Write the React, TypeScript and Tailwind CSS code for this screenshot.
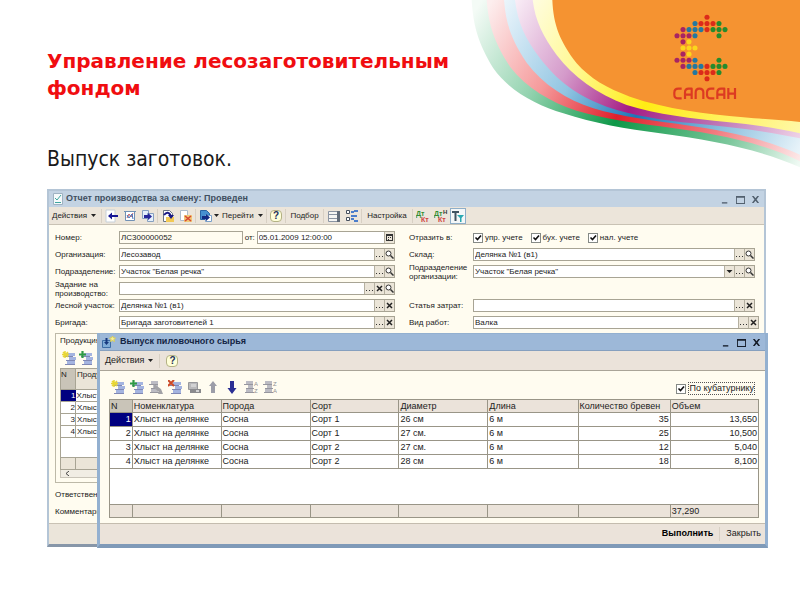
import type { ReactNode } from "react";

const dotColors: Record<string, string> = {
  r: "#dc2a1a",
  b: "#2478a0",
  g: "#258b2d",
  p: "#a82462",
  y: "#fbd61c",
};

const logoRows = [
  ".....r...",
  "...brrrg.",
  ".pbbbrggg",
  "pppb...g.",
  ".py......",
  ".yyy.....",
  ".py......",
  "pppb...g.",
  ".pbbbrggg",
  "...brrrg.",
  ".....r...",
];

function Banner() {
  return (
    <svg
      className="absolute top-0 right-0 w-[340px] h-[180px]"
      viewBox="0 0 1020 540"
      aria-hidden="true"
    >
      <defs>
        <linearGradient id="green" gradientUnits="userSpaceOnUse" x1="90" y1="-40" x2="1000" y2="520">
          <stop offset="0" stopColor="#f4fbf6" />
          <stop offset="0.25" stopColor="#94d3b0" />
          <stop offset="0.5" stopColor="#0e9848" />
          <stop offset="0.8" stopColor="#7cc79c" />
          <stop offset="1" stopColor="#f0faf4" />
        </linearGradient>
        <linearGradient id="red" gradientUnits="userSpaceOnUse" x1="120" y1="-40" x2="1020" y2="480">
          <stop offset="0" stopColor="#fdeeee" />
          <stop offset="0.25" stopColor="#f59a9b" />
          <stop offset="0.48" stopColor="#e0202c" />
          <stop offset="0.75" stopColor="#f27c80" />
          <stop offset="1" stopColor="#fdeaea" />
        </linearGradient>
        <linearGradient id="blue" gradientUnits="userSpaceOnUse" x1="150" y1="-40" x2="1020" y2="450">
          <stop offset="0" stopColor="#edf6fc" />
          <stop offset="0.3" stopColor="#91c5e2" />
          <stop offset="0.52" stopColor="#1d76b6" />
          <stop offset="0.75" stopColor="#86bcdc" />
          <stop offset="1" stopColor="#e9f4fa" />
        </linearGradient>
        <linearGradient id="purple" gradientUnits="userSpaceOnUse" x1="190" y1="-40" x2="1020" y2="420">
          <stop offset="0" stopColor="#f9edf6" />
          <stop offset="0.25" stopColor="#d49aca" />
          <stop offset="0.48" stopColor="#a51d84" />
          <stop offset="0.72" stopColor="#b96cb0" />
          <stop offset="1" stopColor="#efd4e8" />
        </linearGradient>
        <linearGradient id="yellow" gradientUnits="userSpaceOnUse" x1="240" y1="-40" x2="1020" y2="400">
          <stop offset="0" stopColor="#fffde0" />
          <stop offset="0.25" stopColor="#fff88f" />
          <stop offset="0.5" stopColor="#ffec14" />
          <stop offset="0.75" stopColor="#fff25e" />
          <stop offset="1" stopColor="#fff8a8" />
        </linearGradient>
      </defs>
      <path fill="url(#green)" d="M35 0C40 80 55 130 100 205C150 275 230 315 310 340C400 370 500 387 600 400C760 422 900 448 1020 502V0Z" />
      <path fill="url(#red)" d="M80 0C86 80 105 130 150 200C200 265 270 305 350 332C430 356 520 368 600 379C760 400 900 425 1020 484V0Z" />
      <path fill="url(#blue)" d="M132 0C138 75 155 120 200 188C250 255 320 298 400 325C480 350 590 363 680 376C800 393 920 418 1020 464V0Z" />
      <path fill="url(#purple)" d="M165 0C174 70 195 115 240 175C290 240 350 288 440 320C520 348 610 360 700 370C820 382 920 393 1020 415V0Z" />
      <path fill="url(#yellow)" d="M218 0C226 65 250 110 290 165C340 230 410 282 500 315C590 344 700 356 800 366C880 374 950 384 1020 400V0Z" />
      <path fill="#f59331" d="M277 0C280 75 300 125 350 190C390 235 440 265 510 290C620 328 740 342 850 352C920 358 970 361 1020 366V0Z" />
      {logoRows.map((row, y) =>
        row.split("").map((c, x) =>
          c === "." ? null : (
            <circle key={`${x}-${y}`} cx={651 + x * 18} cy={52 + y * 18.4} r="7.6" fill={dotColors[c]} />
          )
        )
      )}
      {/* wordmark strokes */}
      <g fill="none" stroke="#dc3a22" strokeWidth="6.5" strokeLinejoin="round">
        <path d="M665 266H655Q643 266 643 278V284Q643 295 655 295H665" />
        <path d="M675 297V277Q675 266 686 266H695V297M675 284H695" />
        <path d="M707 297V277Q707 266 718 266Q730 266 730 277V297" />
        <path d="M763 266H753Q741 266 741 278V284Q741 295 753 295H763" />
        <path d="M772 297V277Q772 266 783 266H793V297M772 284H793" />
        <path d="M805 264V297M825 264V297M805 281H825" />
      </g>
    </svg>
  );
}

type IconName =
  | "back" | "post" | "copy" | "basis" | "unpost" | "goto" | "list" | "tree"
  | "dk" | "dkn" | "filter" | "add" | "addCopy" | "edit" | "remove" | "save"
  | "up" | "down" | "sortAsc" | "sortDesc" | "doc" | "import";

const rowsGlyph = (
  <g>
    <path fill="#a4b4e0" d="M5 2h8v3H5zM7 6h7v3H7zM5 10h8v3H5z" />
    <path stroke="#8088b4" fill="none" d="M2 5.500h9M4 9.500h9M3 13.500h10" />
  </g>
);
const greyRows = (
  <g>
    <path fill="#bcbcc4" d="M2 1h7v3H2zM4 5h5v3H4zM2 9h7v3H2z" />
    <path stroke="#96969e" fill="none" d="M0 4.500h9M2 8.500h8M1 12.500h9" />
  </g>
);

const icons: Record<IconName, ReactNode> = {
  back: (
    <g>
      <path fill="#fff" stroke="#c7d0d8" d="M1 1h9v12H1z" />
      <path fill="#151594" d="M3 7l4-3.500V6h6v2H7v2.500z" />
    </g>
  ),
  post: (
    <g>
      <path fill="#fff" stroke="#7191b5" d="M2.500 2.500h9v9h-9zM1 2.500h12" />
      <path fill="none" stroke="#c75d62" d="M4 9l2-4 2 3 2-4" />
      <path fill="none" stroke="#3d72bd" d="M4 6l2 3 3-4 1 5" />
    </g>
  ),
  copy: (
    <g>
      <path fill="#e5effb" stroke="#86a0c0" d="M1.500 1.500h6v8h-6zM6.500 4.500h6v8h-6z" />
      <path fill="#26269a" d="M3 6h4V4l4 3.500L7 11V9H3z" />
    </g>
  ),
  basis: (
    <g>
      <path fill="#fff" stroke="#6a7484" d="M2.500 1.500h6l3 3v8h-9z" />
      <path fill="#f2c955" d="M5 8h8v5H5z" />
      <path fill="none" stroke="#1a1a85" strokeWidth="2" d="M3 6q4-5 7 1" />
      <path fill="#1a1a85" d="M7 6h6l-3 4z" />
    </g>
  ),
  unpost: (
    <g>
      <path fill="#fff" stroke="#aebdcc" d="M1.500 1.500h7v10h-7z" />
      <path fill="#f0c877" d="M5 6h8v7H5z" />
      <path stroke="#d64734" strokeWidth="1.600" d="M6 7l6 5M12 7l-6 5" />
    </g>
  ),
  goto: (
    <g>
      <path fill="#468fd0" stroke="#2864a4" d="M1.500 1.500h6l3 3v6h-9z" />
      <path fill="#fff" stroke="#7aa0c8" d="M6.500 6.500h6v6h-6z" />
      <path fill="#122a84" d="M3 7h4V5l4 3.500L7 12v-2H3z" />
    </g>
  ),
  list: (
    <g>
      <path fill="#f6f6f4" stroke="#8b95a3" d="M1.500 2.500h10v10h-10zM1.500 5.500h10M1.500 9.500h10" />
      <path fill="#626c79" d="M10 2h3v11h-3z" />
    </g>
  ),
  tree: (
    <g>
      <path stroke="#46505e" fill="#fff" d="M1.500 1.500h3v3h-3zM1.500 8.500h3v3h-3z" />
      <path fill="#4c7ecb" d="M6 2h3v2H6zM9 1h4v2H9zM6 6h6v2H6zM6 9h3v2H6zM9 11h4v2H9z" />
    </g>
  ),
  dk: (
    <g fontFamily="Liberation Sans, sans-serif" fontSize="7" fontWeight="bold">
      <text x="0" y="7" fill="#328e32">Дт</text>
      <text x="5" y="13" fill="#cf423e">Кт</text>
    </g>
  ),
  dkn: (
    <g fontFamily="Liberation Sans, sans-serif" fontSize="7" fontWeight="bold">
      <text x="0" y="7" fill="#328e32">Дт</text>
      <text x="4" y="13" fill="#cf423e">Кт</text>
      <text x="9" y="5" fontSize="6" fill="#333">Н</text>
    </g>
  ),
  filter: (
    <g>
      <path fill="#3f5362" d="M1 2h7v2H5.500v8h-2V4H1z" />
      <path fill="#2ba9b2" d="M6 6h7L10.500 9v4H9V9z" />
    </g>
  ),
  add: (
    <g>
      {rowsGlyph}
      <path stroke="#e8d634" strokeWidth="1.500" d="M3 0v7M0 3.500h7M1 1l5 5M6 1L1 6" />
    </g>
  ),
  addCopy: (
    <g>
      {rowsGlyph}
      <path stroke="#2f9a45" strokeWidth="2.200" d="M3.500 0v7M0 3.500h7" />
    </g>
  ),
  edit: (
    <g>
      {greyRows}
      <path fill="#a2a2a6" d="M5 4l7 5 2 5H9l1-2-5-4z" />
    </g>
  ),
  remove: (
    <g>
      {rowsGlyph}
      <path stroke="#cb4928" strokeWidth="2" d="M0 0l6 6M6 0L0 6" />
    </g>
  ),
  save: (
    <g>
      <path fill="#b9b9bb" stroke="#98989b" d="M1.500 2.500h9v7h-9z" />
      <path fill="#8a8a8d" d="M3 9h11v4H3z" />
      <path fill="#d2d2d3" d="M4 4h5v3H4zM9 10h3v2H9z" />
    </g>
  ),
  up: <path fill="#9c9da8" d="M7 1l4 5H9v7H5V6H3z" />,
  down: <path fill="#2b2f94" d="M7 14L2.500 8H5V1h4v7h2.500z" />,
  sortAsc: (
    <g>
      {greyRows}
      <g fontFamily="Liberation Sans, sans-serif" fontSize="6" fill="#909092">
        <text x="10" y="6">A</text>
        <text x="10" y="13">Z</text>
      </g>
    </g>
  ),
  sortDesc: (
    <g>
      {greyRows}
      <g fontFamily="Liberation Sans, sans-serif" fontSize="6" fill="#909092">
        <text x="10" y="6">Z</text>
        <text x="10" y="13">A</text>
      </g>
    </g>
  ),
  doc: (
    <g>
      <path fill="#f5fafb" stroke="#9fb2c2" d="M2.500 1.500h9v11h-9z" />
      <path stroke="#40a6a0" fill="none" d="M4 6l2 2 4-5M4 10.500h6" />
    </g>
  ),
  import: (
    <g>
      <path fill="#7fadd8" stroke="#3d6ea6" d="M.500 5.500h8v7h-8z" />
      <path fill="#16397e" d="M3.500 3h2v4H7l-2.500 3L2 7h1.500z" />
      <path fill="#f5ef9a" stroke="#d8cd58" d="M10.500 1l1 1.800 2 .200-1.500 1.500.500 2-2-1-2 1 .500-2L7.500 3l2-.200z" />
    </g>
  ),
};

function Icon({ name }: { name: IconName }) {
  return (
    <svg className="size-3.5 shrink-0" viewBox="0 0 14 14" aria-hidden="true">
      {icons[name]}
    </svg>
  );
}

function Arrow() {
  return (
    <svg className="h-[3px] w-[5px] shrink-0" viewBox="0 0 5 3" aria-hidden="true">
      <path d="M0 0h5L2.500 3z" fill="#222" />
    </svg>
  );
}

function ToolButton({ name, label, arrow }: { name: IconName; label: string; arrow?: boolean }) {
  return (
    <button
      type="button"
      aria-label={label}
      className={arrow ? "flex h-4 w-6 items-center justify-center gap-px" : "flex h-4 w-[17px] items-center justify-center"}
    >
      <Icon name={name} />
      {arrow && <Arrow />}
    </button>
  );
}

function Sep() {
  return <span className="h-3.5 w-px shrink-0 bg-[#d8d0c4]" />;
}

function HelpButton() {
  return (
    <button
      type="button"
      className="flex size-3 items-center justify-center rounded-sm border border-[#b3b184] bg-[#ffffd8] text-[10px] leading-none font-bold text-[#22305a]"
    >
      ?
    </button>
  );
}

function WindowButtons({ active }: { active?: boolean }) {
  return (
    <div className={active ? "flex items-center gap-1.5 text-[#151c28]" : "flex items-center gap-1.5 text-[#52606e]"}>
      {[
        ["Свернуть", "M1 8h6v1.500H1z"],
        ["Развернуть", "M0 1h10v9H0zM1 3v6h8V3z"],
        ["Закрыть окно", "M1 1h2l2 2.500L7 1h2L6.200 5 9 9H7L5 6.500 3 9H1l2.800-4z"],
      ].map(([label, d]) => (
        <button key={label} type="button" aria-label={label}>
          <svg className="size-[9px]" viewBox="0 0 10 10" aria-hidden="true">
            <path d={d} fill="currentColor" fillRule="evenodd" />
          </svg>
        </button>
      ))}
    </div>
  );
}

type Action = "pick" | "find" | "clear" | "drop" | "date";

const actionLabels: Record<Action, string> = {
  pick: "Выбрать",
  find: "Открыть",
  clear: "Очистить",
  drop: "Список",
  date: "Календарь",
};

const actionIcons: Record<Action, ReactNode> = {
  pick: <path d="M1 6h1v1H1zM4 6h1v1H4zM7 6h1v1H7z" fill="#333" />,
  find: (
    <g fill="none" stroke="#333">
      <circle cx="3.500" cy="3.500" r="2.500" fill="#fff" />
      <path d="M5.500 5.500l3 3" strokeWidth="1.500" />
    </g>
  ),
  clear: <path d="M2 2l5 5M7 2L2 7" stroke="#222" strokeWidth="1.500" />,
  drop: <path d="M1.500 3h6l-3 3z" fill="#222" />,
  date: <path d="M1 1h7v7H1zM2 3v4h5V3zM3 4h1v1H3zM5 4h1v1H5zM3 6h1v1H3z" fill="#333" fillRule="evenodd" />,
};

function Field({ id, value, actions = [], className = "flex-1", readOnly }: {
  id: string;
  value: string;
  actions?: Action[];
  className?: string;
  readOnly?: boolean;
}) {
  return (
    <div className={`flex h-[13px] min-w-0 border border-[#a8a494] ${className} ${readOnly ? "bg-[#fffcf0]" : "bg-white"}`}>
      <input id={id} defaultValue={value} readOnly={readOnly} className="w-0 min-w-0 flex-1 bg-transparent px-px leading-[11px] outline-none" />
      {actions.map((a) => (
        <button
          key={a}
          type="button"
          aria-label={actionLabels[a]}
          className="flex w-2.5 shrink-0 items-center justify-center border-l border-[#b5b0a0] bg-[#ebe5d8]"
        >
          <svg className="size-[9px]" viewBox="0 0 9 9" aria-hidden="true">{actionIcons[a]}</svg>
        </button>
      ))}
    </div>
  );
}

function Row({ id, label, value, actions, wide }: {
  id: string;
  label: string;
  value: string;
  actions: Action[];
  wide?: boolean;
}) {
  return (
    <div className={wide ? "-mr-1 flex h-[13px] items-center" : "flex h-[13px] items-center"}>
      <label htmlFor={id} className="w-16 shrink-0 leading-[9px] whitespace-pre">{label}</label>
      <Field id={id} value={value} actions={actions} />
    </div>
  );
}

function Check({ id, label, focused }: { id: string; label: string; focused?: boolean }) {
  return (
    <div className="flex items-center gap-0.5">
      <span className="relative flex size-2.5">
        <input
          id={id}
          type="checkbox"
          defaultChecked
          className="peer size-2.5 appearance-none border border-[#858a86] bg-white"
        />
        <svg className="pointer-events-none absolute inset-0 size-2.5 opacity-0 peer-checked:opacity-100" viewBox="0 0 10 10" aria-hidden="true">
          <path d="M2.500 4.500l2 2 3.500-4" fill="none" stroke="#111" strokeWidth="1.600" />
        </svg>
      </span>
      <label htmlFor={id} className={focused ? "border border-dotted border-[#555] leading-[11px]" : "leading-[11px]"}>
        {label}
      </label>
    </div>
  );
}

const logs = [
  { sort: "Сорт 1", diameter: "26 см", count: "35", volume: "13,650" },
  { sort: "Сорт 1", diameter: "27 см.", count: "25", volume: "10,500" },
  { sort: "Сорт 2", diameter: "27 см.", count: "12", volume: "5,040" },
  { sort: "Сорт 2", diameter: "28 см", count: "18", volume: "8,100" },
];

const columns = ["N", "Номенклатура", "Порода", "Сорт", "Диаметр", "Длина", "Количество бревен", "Объем"];

function ReportWindow() {
  return (
    <section className="flex flex-col border-2 border-b-[3px] border-[#b4c5d6] border-b-[#8796a8] bg-[#fffcf0] text-[8px] text-[#222]">
      <header className="flex h-4 items-center justify-between bg-[#c3d3e3] pr-1 pl-0.5">
        <h2 className="flex items-center gap-px text-[9px] font-bold text-[#3f4f60]">
          <Icon name="doc" />
          Отчет производства за смену: Проведен
        </h2>
        <WindowButtons />
      </header>
      <div className="flex h-[18px] items-center gap-px border-b border-[#c9c2b4] bg-[#ece5da] px-[3px]">
        <button type="button" className="flex w-12 items-center gap-1">Действия <Arrow /></button>
        <Sep />
        <ToolButton name="back" label="Записать" />
        <ToolButton name="post" label="Провести" />
        <ToolButton name="copy" label="Скопировать" />
        <Sep />
        <ToolButton name="basis" label="Ввести на основании" />
        <ToolButton name="unpost" label="Отменить проведение" />
        <Sep />
        <ToolButton name="goto" label="Движения" arrow />
        <button type="button" className="flex w-[43px] items-center gap-1">Перейти <Arrow /></button>
        <Sep />
        <div className="px-0.5"><HelpButton /></div>
        <Sep />
        <button type="button" className="w-[35px] text-center">Подбор</button>
        <Sep />
        <ToolButton name="list" label="Список" />
        <ToolButton name="tree" label="Структура" />
        <Sep />
        <button type="button" className="w-12 text-center">Настройка</button>
        <Sep />
        <ToolButton name="dk" label="Проводки" />
        <ToolButton name="dkn" label="Налоговые проводки" />
        <button type="button" aria-label="Отбор" className="flex h-4 w-4 items-center justify-center border border-[#8eaec8] bg-[#f4f7f8]">
          <Icon name="filter" />
        </button>
      </div>

      <div className="grid grid-cols-[340fr_346fr] gap-3.5 pt-1.5 pr-[9px] pl-1.5">
        <div className="flex flex-col gap-1">
          <div className="flex h-[13px] items-center">
            <label htmlFor="number" className="w-16 shrink-0">Номер:</label>
            <Field id="number" value="ЛС300000052" readOnly className="flex-[124]" />
            <label htmlFor="date" className="w-3.5 shrink-0 pl-0.5">от:</label>
            <Field id="date" value="05.01.2009 12:00:00" actions={["date"]} className="flex-[139]" />
          </div>
          <Row id="org" label="Организация:" value="Лесозавод" actions={["pick", "find"]} />
          <Row id="dept" label="Подразделение:" value={'Участок "Белая речка"'} actions={["pick", "find"]} />
          <Row id="task" label={"Задание на\nпроизводство:"} value="" actions={["pick", "clear", "find"]} />
          <Row id="forest" label="Лесной участок:" value="Делянка №1 (в1)" actions={["pick", "clear"]} />
          <Row id="team" label="Бригада:" value="Бригада заготовителей 1" actions={["pick", "clear"]} />
        </div>
        <div className="flex flex-col gap-1">
          <div className="flex h-[13px] items-center">
            <span className="w-16 shrink-0">Отразить в:</span>
            <div className="flex gap-2">
              <Check id="mgmt" label="упр. учете" />
              <Check id="acc" label="бух. учете" />
              <Check id="tax" label="нал. учете" />
            </div>
          </div>
          <Row id="store" label="Склад:" value="Делянка №1 (в1)" actions={["pick", "find"]} />
          <Row id="orgDept" label={"Подразделение\nорганизации:"} value={'Участок "Белая речка"'} actions={["drop", "pick", "find"]} />
          <div className="h-[13px]" />
          <Row id="cost" label="Статья затрат:" value="" actions={["pick", "clear"]} />
          <Row id="work" label="Вид работ:" value="Валка" actions={["pick", "clear"]} wide />
        </div>
      </div>

      <div className="mt-1 ml-1.5 w-20 border border-[#bdb9a8] px-1 pb-1">
        <h3 className="leading-[14px]">Продукция</h3>
        <div className="flex h-5 items-center">
          <ToolButton name="add" label="Добавить строку" />
          <ToolButton name="addCopy" label="Скопировать строку" />
        </div>
        <table className="w-full table-fixed border-collapse border border-[#a8a494] bg-white leading-[11px]">
          <thead>
            <tr className="h-[21px] bg-[#ebe5d8] text-left align-top">
              <th className="w-[15px] border-r border-[#a8a494] bg-[#c9c4b8] font-normal">N</th>
              <th className="pl-px font-normal">Продукция</th>
            </tr>
          </thead>
          <tbody>
            {logs.map((_, i) => (
              <tr key={i} className="h-3 border-t border-[#a8a494]">
                <td className={i === 0 ? "bg-[#000080] text-right text-white" : "border-r border-[#a8a494] text-right"}>{i + 1}</td>
                <td className="pl-px">Хлыст</td>
              </tr>
            ))}
            <tr className="h-5 border-t border-[#a8a494]"><td colSpan={2} /></tr>
          </tbody>
          <tfoot>
            <tr className="h-3 border-t border-[#a8a494] bg-[#ebe5d8]">
              <td className="border-r border-[#a8a494]" />
              <td />
            </tr>
          </tfoot>
        </table>
        <div className="flex h-2 items-center border border-t-0 border-[#c9c4b8] bg-[#f1ede4] px-1">
          <svg className="size-[5px]" viewBox="0 0 5 5" aria-hidden="true">
            <path d="M4 0L1 2.500 4 5" fill="none" stroke="#444" />
          </svg>
        </div>
      </div>
      <div className="flex flex-col gap-1.5 px-1.5 pt-1.5 pb-1.5 leading-[11px]">
        <p>Ответственный:</p>
        <p>Комментарий:</p>
      </div>
      <footer className="h-[21px] border-t border-[#c9c2b4] bg-[#ebe5da]" />
    </section>
  );
}

function OutputWindow() {
  return (
    <section className="absolute top-36 left-[50px] -right-0.5 flex flex-col border-t border-r-[3px] border-b-4 border-l-[3px] border-[#93b0d0] border-b-[#7f9ab8] bg-[#fffcf0] text-[9px] text-[#222]">
      <header className="flex h-[17px] items-center justify-between border-b border-[#86a0bf] bg-[#9db8d8] pr-1 pl-0.5">
        <h2 className="flex items-center gap-1 font-bold text-[#142544]">
          <Icon name="import" />
          Выпуск пиловочного сырья
        </h2>
        <WindowButtons active />
      </header>
      <div className="flex h-5 items-center gap-1.5 border-b border-[#aaa498] bg-[#ebe3da] px-[5px]">
        <button type="button" className="flex items-center gap-1">Действия <Arrow /></button>
        <Sep />
        <HelpButton />
      </div>
      <div className="flex h-7 items-end justify-between pr-2.5 pb-1 pl-[9px]">
        <div className="flex gap-0.5">
          <ToolButton name="add" label="Добавить" />
          <ToolButton name="addCopy" label="Добавить копированием" />
          <ToolButton name="edit" label="Изменить" />
          <ToolButton name="remove" label="Удалить" />
          <ToolButton name="save" label="Закончить редактирование" />
          <ToolButton name="up" label="Вверх" />
          <ToolButton name="down" label="Вниз" />
          <ToolButton name="sortAsc" label="По возрастанию" />
          <ToolButton name="sortDesc" label="По убыванию" />
        </div>
        <Check id="cubic" label="По кубатурнику" focused />
      </div>
      <div className="pr-1.5 pb-[5px] pl-[9px]">
        <table className="w-full table-fixed border-collapse bg-white leading-[11px] [&_td]:border [&_td]:border-[#999587] [&_td]:px-px [&_th]:border [&_th]:border-[#999587] [&_th]:px-px">
          <colgroup>
            <col className="w-[3.5%]" />
            <col className="w-[13.7%]" />
            <col className="w-[13.7%]" />
            <col className="w-[13.7%]" />
            <col className="w-[13.7%]" />
            <col className="w-[13.9%]" />
            <col className="w-[14.2%]" />
            <col />
          </colgroup>
          <thead>
            <tr className="h-[13px] bg-[#ebe3da] text-left">
              {columns.map((c) => (
                <th key={c} className="font-normal whitespace-nowrap first:bg-[#c9c4b8]">{c}</th>
              ))}
            </tr>
          </thead>
          <tbody>
            {logs.map((log, i) => (
              <tr key={i} className="h-3.5">
                <td className={i === 0 ? "bg-[#000080] text-right text-white" : "text-right"}>{i + 1}</td>
                <td className="whitespace-nowrap">Хлыст на делянке</td>
                <td>Сосна</td>
                <td>{log.sort}</td>
                <td>{log.diameter}</td>
                <td>6 м</td>
                <td className="text-right">{log.count}</td>
                <td className="text-right">{log.volume}</td>
              </tr>
            ))}
            <tr className="h-9"><td colSpan={8} /></tr>
          </tbody>
          <tfoot>
            <tr className="h-[13px] bg-[#ebe3da]">
              {columns.map((c) => (
                <td key={c}>{c === "Объем" ? "37,290" : ""}</td>
              ))}
            </tr>
          </tfoot>
        </table>
      </div>
      <footer className="flex h-[21px] items-center justify-end gap-1.5 border-t border-[#c4bcae] bg-[#ebe3da] pr-1">
        <button type="button" className="font-bold text-black">Выполнить</button>
        <Sep />
        <button type="button">Закрыть</button>
      </footer>
    </section>
  );
}

export default function App() {
  return (
    <main className="relative min-h-screen bg-white pr-[34px] pl-[47px] font-['Liberation_Sans',Arial,sans-serif]">
      <Banner />
      <div className="relative pt-12">
        <h1 className="max-w-[420px] font-['DejaVu_Sans',sans-serif] text-xl leading-[27px] font-bold text-[#f00d10]">
          Управление лесозаготовительным фондом
        </h1>
        <p className="mt-11 font-['DejaVu_Sans_Condensed','DejaVu_Sans',sans-serif] text-[21px] leading-[27px] text-[#1a1a1a]">
          Выпуск заготовок.
        </p>
      </div>
      <div className="relative mt-4">
        <ReportWindow />
        <OutputWindow />
      </div>
    </main>
  );
}
